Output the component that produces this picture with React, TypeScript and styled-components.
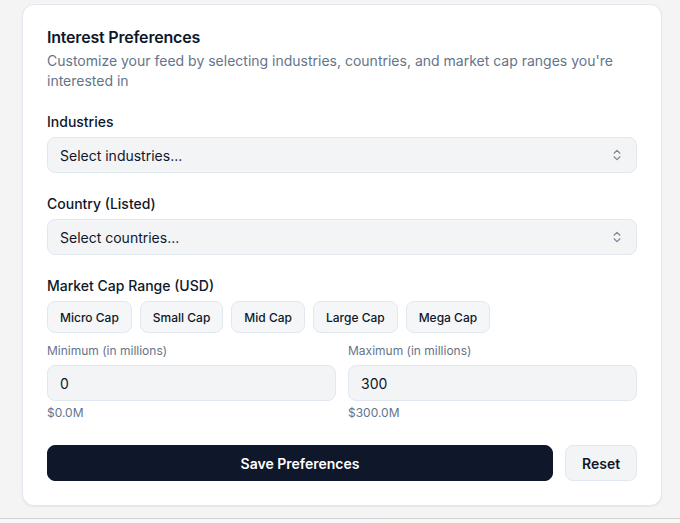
import styled, { createGlobalStyle } from 'styled-components';
import { ChevronsUpDown } from 'lucide-react';

const GlobalStyle = createGlobalStyle`
  html, body {
    margin: 0;
    padding: 0;
    background: #f4f4f5;
    font-family: Inter, "Noto Sans", sans-serif;
    color: #0f172a;
    -webkit-font-smoothing: antialiased;
  }
  * { box-sizing: border-box; }
`;

const Page = styled.div`
  width: 680px;
  height: 523px;
  overflow: hidden;
  padding-top: 4px;
  display: flex;
  flex-direction: column;
`;

const Card = styled.div`
  margin-left: 22px;
  width: 640px;
  background: #fff;
  border: 1px solid #e2e8f0;
  border-radius: 12px;
  box-shadow: 0 1px 2px rgba(15, 23, 42, 0.06);
`;

const Header = styled.div`
  padding: 24px 24px 24px;
  display: flex;
  flex-direction: column;
  gap: 6px;
`;

const Title = styled.h3`
  margin: 0;
  font-size: 16px;
  line-height: 16px;
  font-weight: 600;
  letter-spacing: -0.2px;
  color: #0f172a;
`;

const Description = styled.p`
  margin: 0;
  font-size: 14px;
  line-height: 20px;
  color: #64748b;
`;

const Content = styled.div`
  padding: 0 24px 24px;
  display: flex;
  flex-direction: column;
  gap: 24px;
`;

const Field = styled.div`
  display: flex;
  flex-direction: column;
  gap: 8px;
`;

const Label = styled.label`
  font-size: 14px;
  line-height: 14px;
  font-weight: 500;
  color: #0f172a;
`;

const SmallLabel = styled.label`
  font-size: 12px;
  line-height: 12px;
  color: #64748b;
`;

const SelectBox = styled.button`
  height: 36px;
  width: 100%;
  display: flex;
  align-items: center;
  justify-content: space-between;
  padding: 0 12px;
  background: #f3f4f6;
  border: 1px solid #e2e8f0;
  border-radius: 8px;
  font-family: inherit;
  font-size: 14px;
  color: #0f172a;
  cursor: pointer;

  svg {
    opacity: 0.5;
  }
`;

const Chips = styled.div`
  display: flex;
  gap: 8px;
`;

const Chip = styled.button`
  height: 32px;
  padding: 0 12px;
  background: #f5f6f8;
  border: 1px solid #e2e8f0;
  border-radius: 8px;
  font-family: inherit;
  font-size: 12px;
  font-weight: 500;
  color: #0f172a;
  cursor: pointer;
`;

const RangeGrid = styled.div`
  display: grid;
  grid-template-columns: 1fr 1fr;
  gap: 12px;
  margin-top: -12px;
`;

const Input = styled.input`
  height: 36px;
  width: 100%;
  padding: 0 12px;
  background: #f3f4f6;
  border: 1px solid #e2e8f0;
  border-radius: 8px;
  font-family: inherit;
  font-size: 14px;
  color: #0f172a;
  outline: none;
`;

const Hint = styled.div`
  margin-top: -4px;
  font-size: 12px;
  line-height: 16px;
  color: #64748b;
`;

const Actions = styled.div`
  display: flex;
  gap: 12px;
`;

const Button = styled.button<{ $primary?: boolean }>`
  height: 36px;
  padding: 0 16px;
  flex: ${(p) => (p.$primary ? 1 : 'none')};
  width: ${(p) => (p.$primary ? 'auto' : '72px')};
  border-radius: 8px;
  font-family: inherit;
  font-size: 14px;
  font-weight: 600;
  cursor: pointer;
  background: ${(p) => (p.$primary ? '#0f172a' : '#f3f4f6')};
  color: ${(p) => (p.$primary ? '#ffffff' : '#0f172a')};
  border: 1px solid ${(p) => (p.$primary ? '#0f172a' : '#e2e8f0')};
`;

const Footer = styled.div`
  margin-top: auto;
  height: 5px;
  border-top: 1px solid #d4d4d8;
  display: grid;
  grid-template-columns: 372px 1fr;
`;

const FooterPart = styled.div<{ $tone: string }>`
  background: ${(p) => p.$tone};
`;

const caps = ['Micro Cap', 'Small Cap', 'Mid Cap', 'Large Cap', 'Mega Cap'];

export default function App() {
  const min = 0;
  const max = 300;
  return (
    <>
      <GlobalStyle />
      <Page>
        <Card>
          <Header>
            <Title>Interest Preferences</Title>
            <Description>
              Customize your feed by selecting industries, countries, and market cap ranges you're
              interested in
            </Description>
          </Header>
          <Content>
            <Field>
              <Label>Industries</Label>
              <SelectBox>
                <span>Select industries...</span>
                <ChevronsUpDown size={14} />
              </SelectBox>
            </Field>
            <Field>
              <Label>Country (Listed)</Label>
              <SelectBox>
                <span>Select countries...</span>
                <ChevronsUpDown size={14} />
              </SelectBox>
            </Field>
            <Field>
              <Label>Market Cap Range (USD)</Label>
              <Chips>
                {caps.map((c) => (
                  <Chip key={c}>{c}</Chip>
                ))}
              </Chips>
            </Field>
            <RangeGrid>
              <Field>
                <SmallLabel>Minimum (in millions)</SmallLabel>
                <Input defaultValue={String(min)} />
                <Hint>${min.toFixed(1)}M</Hint>
              </Field>
              <Field>
                <SmallLabel>Maximum (in millions)</SmallLabel>
                <Input defaultValue={String(max)} />
                <Hint>${max.toFixed(1)}M</Hint>
              </Field>
            </RangeGrid>
            <Actions>
              <Button $primary>Save Preferences</Button>
              <Button>Reset</Button>
            </Actions>
          </Content>
        </Card>
        <Footer>
          <FooterPart $tone="#f7f7f7" />
          <FooterPart $tone="#f8f8f2" />
        </Footer>
      </Page>
    </>
  );
}
